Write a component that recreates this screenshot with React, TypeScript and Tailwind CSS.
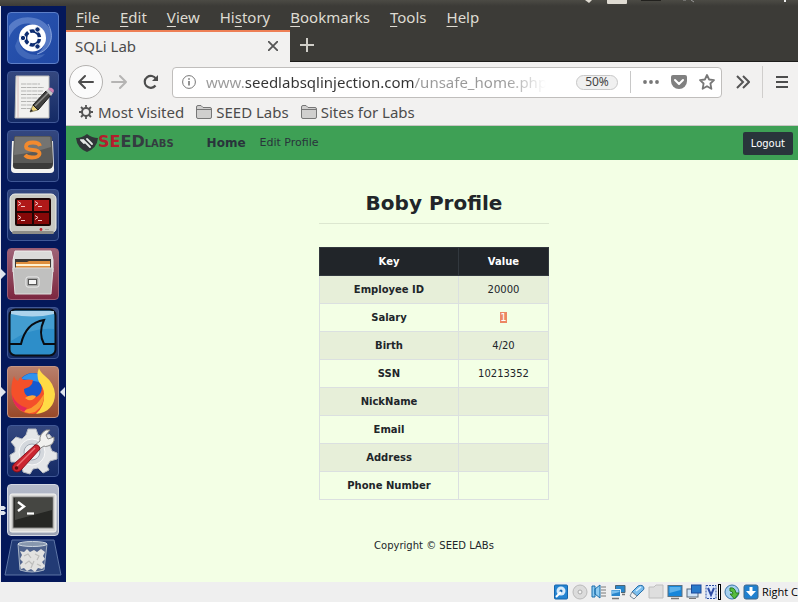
import React, { type ReactNode } from "react";

const UI_FONT = "font-['Noto_Sans',sans-serif]";

function Tile({ label, className, children }: { label: string; className: string; children: ReactNode }) {
  return (
    <button
      aria-label={label}
      className={`flex size-[52px] shrink-0 items-center justify-center rounded border ${className}`}
    >
      <svg viewBox="0 0 52 52" className="size-[52px] shrink-0">
        {children}
      </svg>
    </button>
  );
}

const NAVY_TILE = "border-[#405896] bg-linear-to-b from-[#34477f] to-[#142a66]";

function Launcher() {
  return (
    <nav aria-label="Launcher" className="relative flex w-[66px] shrink-0 flex-col items-center gap-[7px] border-l border-[#e8e8ee] bg-[#04185a] pt-1.5 pr-px">
      <Tile label="Search" className="border-[#5d7fc8] bg-linear-to-br from-[#2a55b0] to-[#2048a4]">
        <path d="M2 14C10 2 34 2 43 17C48 28 40 40 30 42C44 32 38 14 24 12C14 10 6 16 2 26Z" fill="#86a4df" opacity=".5" />
        <path d="M12 24C10 37 22 46 38 42C30 52 10 48 8 34Z" fill="#86a4df" opacity=".3" />
        <path d="M30 42C44 38 48 24 41 12" fill="none" stroke="#a9c0ec" opacity=".7" />
        <circle cx="25.500" cy="26" r="13.500" fill="#fff" />
        <circle cx="25.500" cy="26" r="7" fill="none" stroke="#0d2d72" strokeWidth="3.500" strokeDasharray="12.600 2" strokeDashoffset="-1" />
        <g fill="#0d2d72" stroke="#fff" strokeWidth="1">
          <circle cx="16" cy="26" r="2.700" />
          <circle cx="30.500" cy="17.500" r="2.700" />
          <circle cx="30.500" cy="34.500" r="2.700" />
        </g>
      </Tile>
      <Tile label="Text Editor" className={NAVY_TILE}>
        <path d="M9 5H42V47H8Z" fill="#f1f1ef" stroke="#bcbcba" />
        <path d="M11 5V47" stroke="#d8bcbc" />
        <path d="M14 13H33M14 16.500H37M14 20H36M14 23.500H35M14 27H33M14 30.500H29M14 34H27M14 37.500H24" stroke="#b5b5b3" strokeWidth="1.200" strokeDasharray="5 .6" />
        <path d="M23 41L26 34L31 39Z" fill="#ead27a" stroke="#4f4b30" strokeWidth=".6" />
        <path d="M26 34L39 20L44 24L31 39Z" fill="#41413f" stroke="#191919" />
        <path d="M28 35L41 22" stroke="#8b8b89" strokeWidth="1.500" />
        <path d="M39 20L41 18L46 22L44 25Z" fill="#c4c4c4" />
        <path d="M41 18C43 15 49 18 46 22Z" fill="#cf83b4" />
        <path d="M23 41L24 38L26 40Z" fill="#222" />
      </Tile>
      <Tile label="Sublime Text" className={NAVY_TILE}>
        <path d="M5 11L4 39Q4 43 8 43H43Q48 43 47 38L46 11Z" fill="#f3f3f1" />
        <path d="M9 6H42Q45 6 45 9L46 34Q46 39 41 39H10Q5 39 6 34L7 9Q7 6 9 6Z" fill="#3b3b3a" />
        <path d="M9 6H42Q45 6 45 9V33H6L7 9Q7 6 9 6Z" fill="#5a5a58" />
        <path d="M8 7H43L44 17Q25 23 7 25Z" fill="#868684" opacity=".6" />
        <path d="M33 16Q32 12.500 26 12.500Q19 12.500 19 16.500Q19 19.500 26 20Q33 20.500 32.500 24Q32 27.500 25 27.500Q20 27.500 18 25" fill="none" stroke="#f28a2e" strokeWidth="3.800" />
      </Tile>
      <Tile label="Terminator" className={NAVY_TILE}>
        <rect x="3" y="5" width="46" height="39" rx="5" fill="#c9c9c2" stroke="#efefe9" />
        <rect x="5" y="42" width="42" height="3" rx="1.500" fill="#8e8e88" />
        <rect x="8" y="9" width="36" height="28" rx="2" fill="#1c0505" />
        <path d="M10 11H25V22H10ZM27 11H42V22H27Z" fill="#b01919" />
        <path d="M10 24H25V35H10ZM27 24H42V35H27Z" fill="#850808" />
        <path d="M11 12.500L14 14.500L11 16.500M14 17.500H18M28 12.500L31 14.500L28 16.500M31 17.500H35M11 26.500L14 28.500L11 30.500M14 31.500H18M28 26.500L31 28.500L28 30.500M31 31.500H35" fill="none" stroke="#f3c7c7" />
        <circle cx="34" cy="40.500" r="1.400" fill="#c21f2c" />
        <path d="M38 40.500H42" stroke="#a6a69f" />
      </Tile>
      <Tile label="Files" className="border-[#9c5d74] bg-linear-to-b from-[#9e6377] to-[#7c2640]">
        <path d="M8 3H44L46 12V24H6V12Z" fill="#dadad9" stroke="#ededec" />
        <rect x="8" y="11" width="36" height="12" fill="#3b3835" />
        <path d="M9 14H20L22 13H43V21H9Z" fill="#de8e3d" />
        <path d="M9 17H43" stroke="#fff1d0" strokeWidth="2" />
        <path d="M6 20H46L44 46H8Z" fill="#c0c0bf" stroke="#dededd" />
        <rect x="19" y="29" width="13" height="10" rx="2" fill="#a7a7a6" stroke="#eee" />
        <rect x="21.500" y="31.500" width="8" height="5" fill="#f4f4f4" stroke="#555" />
      </Tile>
      <Tile label="Wireshark" className={NAVY_TILE}>
        <rect x="2.500" y="2.500" width="46" height="46" rx="6" fill="#2d8ec9" stroke="#0a0f17" strokeWidth="2" />
        <path d="M4 4H47V22Q25 20 4 34Z" fill="#59abd8" opacity=".5" />
        <path d="M4 4H47V7Q25 12 4 7Z" fill="#cfe6f5" opacity=".75" />
        <path d="M3 37H14C17 24 24 15 37 13Q31 26 37 37H48" fill="none" stroke="#080c12" strokeWidth="2" />
      </Tile>
      <Tile label="Firefox" className="border-[#c49583] bg-linear-to-b from-[#b97f6b] to-[#994929]">
        <circle cx="26" cy="23" r="16" fill="#1559cf" />
        <path d="M14 13Q22 4 34 9L32 16L22 14Z" fill="#2f93ec" />
        <path d="M7 10Q8 14 11 15Q12 12 14 11Q15 14 18 14Q22 13 26 14L25 18L22 21L17 23Q17 29 22 31Q29 33 33 28Q37 22 32 14L38 14L46 28Q44 46 26 48Q9 48 5 31Q3 20 7 10Z" fill="#f4502a" />
        <path d="M32 2Q33 6 38 10Q47 17 48 28C48 39 41 47 29 48Q38 40 37 28Q37 22 32 16Q29 9 32 2Z" fill="#ffdb45" />
        <path d="M37 28Q38 39 28 46Q20 49 14 44Q26 44 33 34Z" fill="#fb9a31" />
        <path d="M5 29Q9 39 20 42L17 46Q6 41 5 29Z" fill="#e32958" />
        <path d="M18 32Q23 28 29 30Q27 35 21 34Z" fill="#ffa636" />
      </Tile>
      <Tile label="System Settings" className={NAVY_TILE}>
        <path d="M21 4H29L31 10L36 12L42 9L47 15L43 21L45 26L50 28V34L43 36L40 41L42 45L36 48L31 43L26 44L23 49L16 47L15 41L10 37L4 37L3 30L8 27L8 22L4 17L9 12L15 14L19 10Z" fill="#e4e6e8" stroke="#b6bac1" />
        <circle cx="25" cy="27" r="13" fill="#d4d8dd" stroke="#f8f8f8" />
        <circle cx="25" cy="27" r="8" fill="#eceef0" stroke="#9fa7b3" />
        <path d="M32 24L28 20L33 16Q32 9 39 5L43 5L39 10L41 14L47 12Q48 19 41 21Q38 22 37 21Z" fill="#f1f1ef" stroke="#868686" />
        <path d="M28 20Q32 19 33 24L14 45Q10 49 6 45Q4 42 7 39Z" fill="#cb2530" stroke="#871019" />
        <path d="M28 23L10 41" stroke="#ee7374" strokeWidth="1.500" />
        <circle cx="9.500" cy="43" r="1.800" fill="#5b0d12" />
      </Tile>
      <Tile label="Terminal" className="border-[#d3d7e2] bg-linear-to-b from-[#b4bac9] to-[#9ba3b5]">
        <rect x="3" y="10" width="46" height="38" rx="2" fill="#d9d9d7" stroke="#f6f6f4" />
        <rect x="6" y="13" width="40" height="31" fill="#262724" stroke="#8d8d8b" />
        <path d="M8 14H45V26L8 36Z" fill="#565753" opacity=".65" />
        <path d="M11 18L17 22.500L11 27" fill="none" stroke="#fff" strokeWidth="2.400" />
        <path d="M20 29.500H27" stroke="#fff" strokeWidth="2.200" />
      </Tile>
      <button aria-label="Trash" className="-mt-1 h-[38px] w-[58px] shrink-0">
        <svg viewBox="0 0 58 38" className="h-[38px] w-[58px]">
          <path d="M8 1H50L57 36H1Z" fill="#223b75" stroke="#5d75a5" />
          <path d="M14 5L16 31Q28 35 40 31L43 5Z" fill="#50648d" stroke="#a6b3c5" />
          <path d="M16 12L20 13L23 10L26 13L30 11L33 13L37 10L41 13L39 17L41 20L38 23L41 27L38 30L34 29L31 33L27 30L23 32L20 29L17 30L16 26L19 23L16 20L18 16Z" fill="#e2e2e0" />
          <path d="M20 17L24 15L27 19M31 15L35 17L33 21M21 25L25 22L29 26M33 25L37 27M27 29L30 22" fill="none" stroke="#bdbdbb" strokeWidth="1.200" />
          <ellipse cx="28.500" cy="5" rx="14.500" ry="2.500" fill="#8797ae" stroke="#ced7e0" />
        </svg>
      </button>
      <svg viewBox="0 0 66 576" aria-hidden="true" className="pointer-events-none absolute top-0 left-0 h-[576px] w-[66px]" fill="#dfe5ee">
        <path d="M0 263L5 268L0 273ZM0 381L5 386L0 391ZM64 381L59 386L64 391Z" />
        <path d="M0 500H3L5 502L3 504H0ZM0 505H3L5 507L3 509H0Z" />
      </svg>
    </nav>
  );
}

const menus: [string, string, string][] = [
  ["", "F", "ile"],
  ["", "E", "dit"],
  ["", "V", "iew"],
  ["Hi", "s", "tory"],
  ["", "B", "ookmarks"],
  ["", "T", "ools"],
  ["", "H", "elp"],
];

function MenuBar() {
  return (
    <div className="flex h-6 items-center gap-5 bg-[#3c3b37] pb-0.5 pl-2.5 text-[15px] leading-5 text-[#dfdbd2]">
      {menus.map(([before, key, after]) => (
        <button key={key + after}>
          {before}
          <span className="underline decoration-1 underline-offset-3">{key}</span>
          {after}
        </button>
      ))}
    </div>
  );
}

function TabStrip() {
  return (
    <div className="flex h-8 bg-[#3c3b37]">
      <div className="flex w-56 items-center justify-between border-t-2 border-[#ee7f55] bg-[#f2f1f0] pr-3 pb-0.5 pl-[9px] text-[15px] leading-5 text-[#4c4c4c]">
        <span>SQLi Lab</span>
        <button aria-label="Close tab">
          <svg viewBox="0 0 10 10" className="size-2.5" stroke="#555" strokeWidth="1.800">
            <path d="M0 0L10 10M10 0L0 10" />
          </svg>
        </button>
      </div>
      <button aria-label="New tab" className="flex flex-1 items-center border-b border-[#1e1d1b] pb-0.5 pl-2.5">
        <svg viewBox="0 0 14 14" className="size-3.5" stroke="#d0cec8" strokeWidth="2">
          <path d="M7 0V14M0 7H14" />
        </svg>
      </button>
    </div>
  );
}

function Toolbar() {
  return (
    <div className="flex h-10 items-center pr-2.5 pl-[3px]">
      <button aria-label="Back" className="flex size-[34px] items-center justify-center rounded-full border border-[#b4b2b0] bg-[#fbfbfb]">
        <svg viewBox="0 0 16 16" className="size-4" fill="none" stroke="#4d4d4d" strokeWidth="2" strokeLinecap="round" strokeLinejoin="round">
          <path d="M15 8H1M7 2L1 8L7 14" />
        </svg>
      </button>
      <button aria-label="Forward" className="ml-2">
        <svg viewBox="0 0 16 16" className="size-4" fill="none" stroke="#b5b4b3" strokeWidth="2" strokeLinecap="round" strokeLinejoin="round">
          <path d="M1 8H15M9 2L15 8L9 14" />
        </svg>
      </button>
      <button aria-label="Reload" className="ml-4">
        <svg viewBox="0 0 16 16" className="size-4" fill="none" stroke="#4d4d4d" strokeWidth="2.200">
          <path d="M12.500 11.500A6 6 0 1 1 13 5" />
          <path d="M15 1V7H9Z" fill="#4d4d4d" stroke="none" />
        </svg>
      </button>
      <div className="ml-[13px] flex h-[31px] min-w-0 flex-1 items-center rounded border border-[#c0bebc] bg-white pl-[9px] pr-1.5">
        <svg viewBox="0 0 14 14" className="size-3.5 shrink-0" fill="none" stroke="#777">
          <circle cx="7" cy="7" r="6.400" />
          <path d="M7 6V10.500M7 3.200V4.700" strokeWidth="1.600" />
        </svg>
        <input
          aria-label="Address"
          defaultValue="www.seedlabsqlinjection.com/unsafe_home.php"
          className="ml-2.5 min-w-0 flex-1 bg-[linear-gradient(90deg,#999_0_39px,#333_39px_208px,#999_208px_300px,#fff_340px)] bg-clip-text text-[15px] text-transparent outline-none"
        />
        <span className="ml-6 flex h-[15px] w-[42px] shrink-0 items-center justify-center rounded-full border border-[#c8c8c8] bg-[#f0f0f0] text-[12px] text-[#444]">50%</span>
        <span className="ml-3 h-[22px] w-px bg-[#c8c8c8]" />
        <button aria-label="Page actions" className="ml-3">
          <svg viewBox="0 0 16 16" className="size-4" fill="#777">
            <circle cx="2" cy="8" r="1.900" />
            <circle cx="8" cy="8" r="1.900" />
            <circle cx="14" cy="8" r="1.900" />
          </svg>
        </button>
        <button aria-label="Save to Pocket" className="ml-3">
          <svg viewBox="0 0 16 16" className="size-4">
            <path d="M2 1H14Q16 1 16 3V7A8 8 0 0 1 0 7V3Q0 1 2 1Z" fill="#808080" />
            <path d="M4 6L8 10L12 6" fill="none" stroke="#fff" strokeWidth="2" strokeLinecap="round" strokeLinejoin="round" />
          </svg>
        </button>
        <button aria-label="Bookmark this page" className="ml-3">
          <svg viewBox="0 0 16 16" className="size-4" fill="none" stroke="#777" strokeWidth="1.800" strokeLinejoin="round">
            <path d="M8 1L10.100 5.500L15 6.100L11.400 9.500L12.400 14.800L8 12.200L3.600 14.800L4.600 9.500L1 6.100L5.900 5.500Z" />
          </svg>
        </button>
      </div>
      <button aria-label="More tools" className="ml-3.5">
        <svg viewBox="0 0 14 14" className="size-3.5" fill="none" stroke="#555" strokeWidth="2">
          <path d="M1 1L7 7L1 13M7 1L13 7L7 13" />
        </svg>
      </button>
      <span className="ml-3 h-8 w-px bg-[#d0cecc]" />
      <button aria-label="Open menu" className="ml-[13px]">
        <svg viewBox="0 0 12 12" className="size-3" stroke="#4d4d4d" strokeWidth="2">
          <path d="M0 1H12M0 6H12M0 11H12" />
        </svg>
      </button>
    </div>
  );
}

function FolderIcon() {
  return (
    <svg viewBox="0 0 16 14" className="h-3.5 w-4" fill="#d0cfce" stroke="#777">
      <path d="M.5 12V2Q.5 .5 2 .5H5L7 2.500H14Q15.500 2.500 15.500 4V12Q15.500 13.500 14 13.500H2Q.5 13.500 .5 12ZM.5 4.500H15.500" />
    </svg>
  );
}

function BookmarksBar() {
  return (
    <div className="flex h-6 items-center gap-3 border-b border-[#c8c6c3] pb-1 pl-3 text-[15px] leading-5 text-[#4c4c4c]">
      <button className="flex items-center gap-1">
        <svg viewBox="0 0 16 16" className="size-4" fill="none" stroke="#555">
          <circle cx="8" cy="8" r="4" strokeWidth="2" />
          <path d="M8 1V4M8 12V15M1 8H4M12 8H15M3 3L5 5M11 11L13 13M13 3L11 5M5 11L3 13" strokeWidth="1.800" />
        </svg>
        Most Visited
      </button>
      <button className="flex items-center gap-1">
        <FolderIcon />
        SEED Labs
      </button>
      <button className="flex items-center gap-1">
        <FolderIcon />
        Sites for Labs
      </button>
    </div>
  );
}

function SiteNav() {
  return (
    <nav aria-label="Site" className="flex h-[34px] items-center bg-[#3ea055] pr-[5px] pl-2.5 text-[#29343b]">
      <a href="#" aria-label="SEED Labs" className="flex items-center">
        <svg viewBox="0 0 22 18" className="h-[18px] w-[22px]">
          <path d="M0 4Q6 4 11 0Q16 4 22 4Q21 14 11 18Q1 14 0 4Z" fill="#303638" />
          <path d="M7 6L14 13M11 5L16 10M5 6L8 9" stroke="#e4e9e6" strokeWidth="1.800" strokeLinecap="round" />
        </svg>
        <span className="flex items-baseline leading-5 font-bold">
          <span className="text-[16px] text-[#b51d2d]">SE</span>
          <span className="text-[16px] text-[#343c40]">ED</span>
          <span className="text-[10px] text-[#343c40]">LABS</span>
        </span>
      </a>
      <a href="#" className="ml-[33px] text-[12px] font-bold">Home</a>
      <a href="#" className="ml-3.5 text-[11px]">Edit Profile</a>
      <button className="ml-auto h-[23px] rounded-xs bg-[#29343b] px-2 text-[10px] text-white">Logout</button>
    </nav>
  );
}

const rows: [string, string][] = [
  ["Employee ID", "20000"],
  ["Salary", "1"],
  ["Birth", "4/20"],
  ["SSN", "10213352"],
  ["NickName", ""],
  ["Email", ""],
  ["Address", ""],
  ["Phone Number", ""],
];

function Profile() {
  return (
    <main className="flex flex-1 flex-col items-center bg-[#f3ffe5] pt-[29px] pb-7 pl-1 text-[10px] text-[#212529]">
      <div className="w-[230px]">
        <h1 className="text-center text-[20px] leading-7 font-bold">Boby Profile</h1>
        <hr className="mt-1.5 mb-[23px] border-[#dce7d0]" />
        <table className="w-full table-fixed border-collapse text-center leading-[15px]">
          <thead>
            <tr className="h-7 bg-[#212529] text-white">
              <th scope="col" className="w-[139px] border border-[#32383e]">Key</th>
              <th scope="col" className="border border-[#32383e]">Value</th>
            </tr>
          </thead>
          <tbody>
            {rows.map(([key, value]) => (
              <tr key={key} className="h-7 odd:bg-[#e7efd9]">
                <th scope="row" className="border border-[#dbe0e0]">{key}</th>
                <td className="border border-[#dbe0e0]">
                  {key === "Salary" ? <mark className="bg-[#ec8763] text-white">{value}</mark> : value}
                </td>
              </tr>
            ))}
          </tbody>
        </table>
      </div>
      <p className="mt-[38px] leading-[15px]">Copyright © SEED LABs</p>
    </main>
  );
}

function StatusIcon({ label, children }: { label: string; children: ReactNode }) {
  return (
    <svg role="img" aria-label={label} viewBox="0 0 16 16" className="size-4 shrink-0">
      {children}
    </svg>
  );
}

function StatusBar() {
  return (
    <footer className="flex h-5 items-center justify-end gap-[3px] overflow-hidden bg-[#efefef] font-['Open_Sans',sans-serif] text-[11px] whitespace-nowrap text-black">
      <StatusIcon label="Hard disk">
        <rect x="1.500" y="1" width="13" height="14" rx="1" fill="#2584d2" stroke="#1565ac" />
        <circle cx="8" cy="7" r="4.500" fill="#d7eafa" />
        <circle cx="8" cy="7" r="1.500" fill="#1669b4" />
        <path d="M3 13L8 8" stroke="#fff" strokeWidth="2" />
      </StatusIcon>
      <StatusIcon label="Optical disk">
        <circle cx="8" cy="8" r="7" fill="#dcdcdc" stroke="#bababa" />
        <circle cx="8" cy="8" r="2" fill="#f4f4f4" stroke="#aaa" />
      </StatusIcon>
      <StatusIcon label="Audio">
        <path d="M1 2H4V13H1ZM4 5L9 1V14L4 10Z" fill="#8ecbf0" stroke="#176dac" />
        <path d="M10 3H15M10 6H15M10 9H15M10 12H15" stroke="#b4b4b4" strokeWidth="1.800" />
      </StatusIcon>
      <StatusIcon label="Network">
        <path d="M5.500 1.500H15V8.500H5.500Z" fill="#2986cc" stroke="#4d6575" />
        <path d="M1 5.500H10.500V12.500H1Z" fill="#2986cc" stroke="#eef3f7" />
        <path d="M2 6.500H9.500V8L2 10Z" fill="#7cc0ee" />
        <path d="M2 14.500H9M12 10.500H15" stroke="#777" strokeWidth="1.500" />
      </StatusIcon>
      <StatusIcon label="USB">
        <path d="M3 8L9 2Q14 0 15 4Q15 6 13 7L8 12Z" fill="#7bbdec" stroke="#256fab" />
        <path d="M3 8L8 12L5 15L1 12Z" fill="#f1f1f1" stroke="#789" />
        <path d="M7 7L12 3" stroke="#d9f0ff" strokeWidth="1.500" />
      </StatusIcon>
      <StatusIcon label="Shared folders">
        <path d="M1 3H6L8 1H15V14H1Z" fill="#dedede" stroke="#bebebe" />
      </StatusIcon>
      <StatusIcon label="Display">
        <rect x="1" y="1.500" width="14" height="11" fill="#1686da" stroke="#5c7180" />
        <path d="M2.500 3H13.500V6L2.500 9Z" fill="#5db1eb" />
        <path d="M4 14.500H12" stroke="#777" strokeWidth="1.500" />
      </StatusIcon>
      <StatusIcon label="Recording">
        <rect x="1" y="5" width="11" height="8" fill="#cfe3f6" stroke="#566779" />
        <rect x="5.500" y="1" width="9.500" height="8" fill="#2879c9" stroke="#1d4a9b" />
        <path d="M3 14.500H10" stroke="#777" />
      </StatusIcon>
      <StatusIcon label="Virtualization">
        <rect x="1" y="1.500" width="10" height="13" fill="#dce8fd" stroke="#2b4ea2" strokeDasharray="2 1" />
        <path d="M3 4L6 11L9 4" fill="none" stroke="#304da4" strokeWidth="2" />
        <rect x="13.500" y=".5" width="2" height="15" fill="#fff" stroke="#000" />
      </StatusIcon>
      <StatusIcon label="Mouse integration">
        <circle cx="8" cy="8" r="7" fill="#a5cfee" stroke="#3b75aa" />
        <path d="M6 4Q11 3 12 9H15L10.500 15L6 10H9Q9 7 6 7Z" fill="#56bd3c" stroke="#2a7d22" />
      </StatusIcon>
      <StatusIcon label="Keyboard capture">
        <rect x="1" y="1" width="14" height="14" rx="2" fill="#2080cf" stroke="#3e6688" />
        <path d="M6.500 3H9.500V7H13L8 12.500L3 7H6.500Z" fill="#fff" />
      </StatusIcon>
      <span>Right C</span>
    </footer>
  );
}

export default function App() {
  return (
    <div className={`flex min-h-screen flex-col bg-[#efefef] ${UI_FONT}`}>
      <div className="flex h-1.5 justify-end bg-linear-to-b from-[#4c4b45] to-[#3c3b37]">
        <svg viewBox="0 0 220 6" aria-hidden="true" className="h-1.5 w-[220px]">
          <path d="M7 0H14L11 3Z" fill="#dfdbd2" />
          <rect x="29" y="-2" width="20" height="6" rx="1" fill="#dfdbd2" />
          <rect x="63" y="-1" width="20" height="2" fill="#22211e" />
          <path d="M105 0H108M113 0L116 2" stroke="#999" />
          <path d="M207 0V2" stroke="#eee" strokeWidth="2" />
        </svg>
      </div>
      <div className="flex flex-1">
        <Launcher />
        <div className="flex min-w-0 flex-1 flex-col bg-[#f2f1f0]">
          <MenuBar />
          <TabStrip />
          <Toolbar />
          <BookmarksBar />
          <div className="flex flex-1 flex-col font-['DejaVu_Sans',sans-serif]">
            <SiteNav />
            <Profile />
          </div>
        </div>
      </div>
      <StatusBar />
    </div>
  );
}
